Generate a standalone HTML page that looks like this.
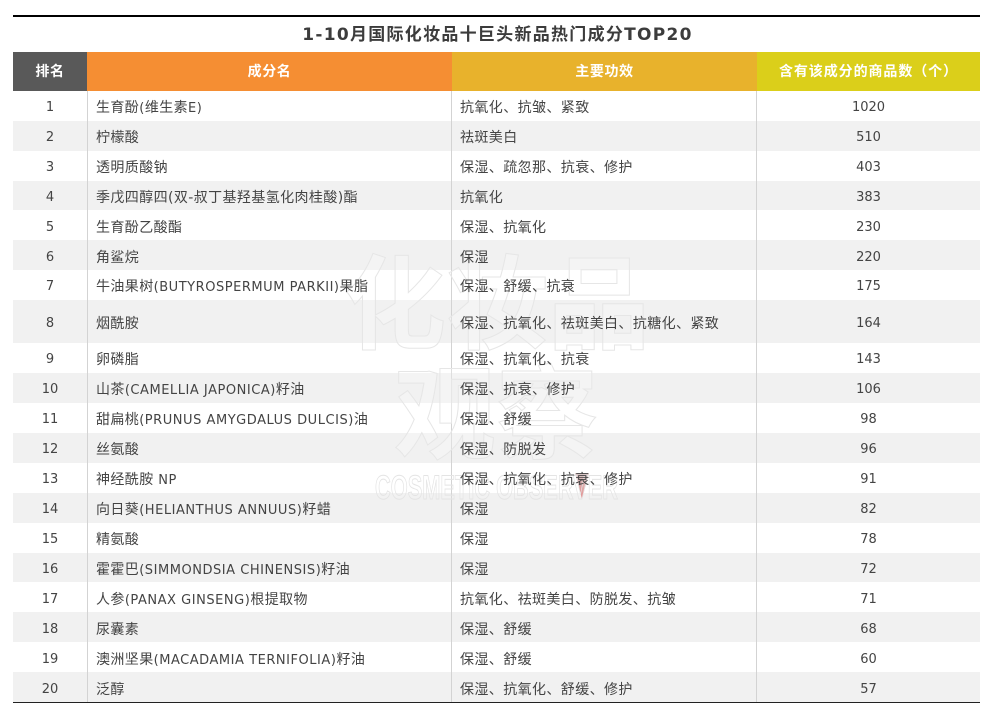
<!DOCTYPE html>
<html lang="zh"><head><meta charset="utf-8"><title>1-10月国际化妆品十巨头新品热门成分TOP20</title>
<style>
html,body{margin:0;padding:0;background:#fff}
#p{position:relative;width:995px;height:716px;overflow:hidden;font-family:"DejaVu Sans","Noto Sans CJK SC",sans-serif;color:#444;font-size:14px;filter:blur(.3px)}
#p>div{position:absolute}
.r{left:13px;width:967px}
.g{background:#f1f1f1}
.t{white-space:nowrap;letter-spacing:.4px;line-height:20px;margin-top:1px}
.t span{font-size:13px;letter-spacing:.53px}
.c{text-align:center;font-size:13px;letter-spacing:0}
.h{top:52px;height:39px;line-height:41px;color:#fff;font-weight:700;text-align:center;letter-spacing:.6px;font-size:14px}
.n{left:13px;width:74px}
.a{left:96px}
.b{left:460px}
.d{left:757px;width:223px}
.v{width:1px;background:#d3d3d3;top:91px;height:611px}
svg{position:absolute;left:0;top:0}
</style></head><body><div id="p">
<div style="left:13px;top:15px;width:967px;height:2px;background:#000"></div>
<div class="t" style="left:14px;top:24px;width:967px;text-align:center;font-size:17px;font-weight:700;color:#3c3c3c;letter-spacing:1.28px">1-10月国际化妆品十巨头新品热门成分TOP20</div>
<div class="h" style="left:13px;width:74px;background:#595959">排名</div>
<div class="h" style="left:87px;width:365px;background:#f58e33">成分名</div>
<div class="h" style="left:452px;width:305px;background:#e8b22c">主要功效</div>
<div class="h" style="left:757px;width:223px;background:#dbcf1a;letter-spacing:.92px">含有该成分的商品数（个）</div>
<div class="r g" style="top:121px;height:30px"></div>
<div class="r g" style="top:181px;height:29px"></div>
<div class="r g" style="top:240px;height:30px"></div>
<div class="r g" style="top:300px;height:43px"></div>
<div class="r g" style="top:373px;height:30px"></div>
<div class="r g" style="top:433px;height:30px"></div>
<div class="r g" style="top:493px;height:30px"></div>
<div class="r g" style="top:553px;height:29px"></div>
<div class="r g" style="top:612px;height:30px"></div>
<div class="r g" style="top:672px;height:30px"></div>
<div class="v" style="left:87px"></div><div class="v" style="left:451px"></div><div class="v" style="left:756px"></div>
<svg width="995" height="716" viewBox="0 0 995 716">
<defs><linearGradient id="vg" x1="0" y1="0" x2="0" y2="1"><stop offset="0" stop-color="#d8c8c8"/><stop offset="1" stop-color="#e07f7f"/></linearGradient></defs>
<path d="M575 473h14l-7 26z" fill="url(#vg)"/>
<g fill="#ffffff" fill-opacity=".25" stroke="#e6e6e6" stroke-width="1" font-family="'Noto Sans CJK SC',sans-serif" font-weight="700">
<text x="344" y="341" font-size="102">化妆品</text>
<text x="394" y="451" font-size="102">观察</text>
</g>
<text x="375" y="499" font-size="34" font-weight="700" fill="#ffffff" fill-opacity=".12" stroke="#e4e4e4" stroke-width="1" textLength="243" lengthAdjust="spacingAndGlyphs" font-family="'Liberation Sans',sans-serif">COSMETIC OBSERVER</text>
</svg>
<div class="n c t" style="top:97px">1</div><div class="a t" style="top:97px">生育酚<span>(</span>维生素<span>E)</span></div><div class="b t" style="top:97px">抗氧化、抗皱、紧致</div><div class="d c t" style="top:97px">1020</div>
<div class="n c t" style="top:127px">2</div><div class="a t" style="top:127px">柠檬酸</div><div class="b t" style="top:127px">祛斑美白</div><div class="d c t" style="top:127px">510</div>
<div class="n c t" style="top:157px">3</div><div class="a t" style="top:157px">透明质酸钠</div><div class="b t" style="top:157px">保湿、疏忽那、抗衰、修护</div><div class="d c t" style="top:157px">403</div>
<div class="n c t" style="top:187px">4</div><div class="a t" style="top:187px">季戊四醇四(双-叔丁基羟基氢化肉桂酸)酯</div><div class="b t" style="top:187px">抗氧化</div><div class="d c t" style="top:187px">383</div>
<div class="n c t" style="top:217px">5</div><div class="a t" style="top:217px">生育酚乙酸酯</div><div class="b t" style="top:217px">保湿、抗氧化</div><div class="d c t" style="top:217px">230</div>
<div class="n c t" style="top:247px">6</div><div class="a t" style="top:247px">角鲨烷</div><div class="b t" style="top:247px">保湿</div><div class="d c t" style="top:247px">220</div>
<div class="n c t" style="top:276px">7</div><div class="a t" style="top:276px">牛油果树<span>(BUTYROSPERMUM PARKII)</span>果脂</div><div class="b t" style="top:276px">保湿、舒缓、抗衰</div><div class="d c t" style="top:276px">175</div>
<div class="n c t" style="top:313px">8</div><div class="a t" style="top:313px">烟酰胺</div><div class="b t" style="top:313px">保湿、抗氧化、祛斑美白、抗糖化、紧致</div><div class="d c t" style="top:313px">164</div>
<div class="n c t" style="top:349px">9</div><div class="a t" style="top:349px">卵磷脂</div><div class="b t" style="top:349px">保湿、抗氧化、抗衰</div><div class="d c t" style="top:349px">143</div>
<div class="n c t" style="top:379px">10</div><div class="a t" style="top:379px">山茶<span>(CAMELLIA JAPONICA)</span>籽油</div><div class="b t" style="top:379px">保湿、抗衰、修护</div><div class="d c t" style="top:379px">106</div>
<div class="n c t" style="top:409px">11</div><div class="a t" style="top:409px">甜扁桃<span>(PRUNUS AMYGDALUS DULCIS)</span>油</div><div class="b t" style="top:409px">保湿、舒缓</div><div class="d c t" style="top:409px">98</div>
<div class="n c t" style="top:439px">12</div><div class="a t" style="top:439px">丝氨酸</div><div class="b t" style="top:439px">保湿、防脱发</div><div class="d c t" style="top:439px">96</div>
<div class="n c t" style="top:469px">13</div><div class="a t" style="top:469px">神经酰胺<span> NP</span></div><div class="b t" style="top:469px">保湿、抗氧化、抗衰、修护</div><div class="d c t" style="top:469px">91</div>
<div class="n c t" style="top:499px">14</div><div class="a t" style="top:499px">向日葵<span>(HELIANTHUS ANNUUS)</span>籽蜡</div><div class="b t" style="top:499px">保湿</div><div class="d c t" style="top:499px">82</div>
<div class="n c t" style="top:529px">15</div><div class="a t" style="top:529px">精氨酸</div><div class="b t" style="top:529px">保湿</div><div class="d c t" style="top:529px">78</div>
<div class="n c t" style="top:559px">16</div><div class="a t" style="top:559px">霍霍巴<span>(SIMMONDSIA CHINENSIS)</span>籽油</div><div class="b t" style="top:559px">保湿</div><div class="d c t" style="top:559px">72</div>
<div class="n c t" style="top:589px">17</div><div class="a t" style="top:589px">人参<span>(PANAX GINSENG)</span>根提取物</div><div class="b t" style="top:589px">抗氧化、祛斑美白、防脱发、抗皱</div><div class="d c t" style="top:589px">71</div>
<div class="n c t" style="top:619px">18</div><div class="a t" style="top:619px">尿囊素</div><div class="b t" style="top:619px">保湿、舒缓</div><div class="d c t" style="top:619px">68</div>
<div class="n c t" style="top:649px">19</div><div class="a t" style="top:649px">澳洲坚果<span>(MACADAMIA TERNIFOLIA)</span>籽油</div><div class="b t" style="top:649px">保湿、舒缓</div><div class="d c t" style="top:649px">60</div>
<div class="n c t" style="top:679px">20</div><div class="a t" style="top:679px">泛醇</div><div class="b t" style="top:679px">保湿、抗氧化、舒缓、修护</div><div class="d c t" style="top:679px">57</div>
<div style="left:13px;top:702px;width:967px;height:1px;background:#222"></div>
</div></body></html>
